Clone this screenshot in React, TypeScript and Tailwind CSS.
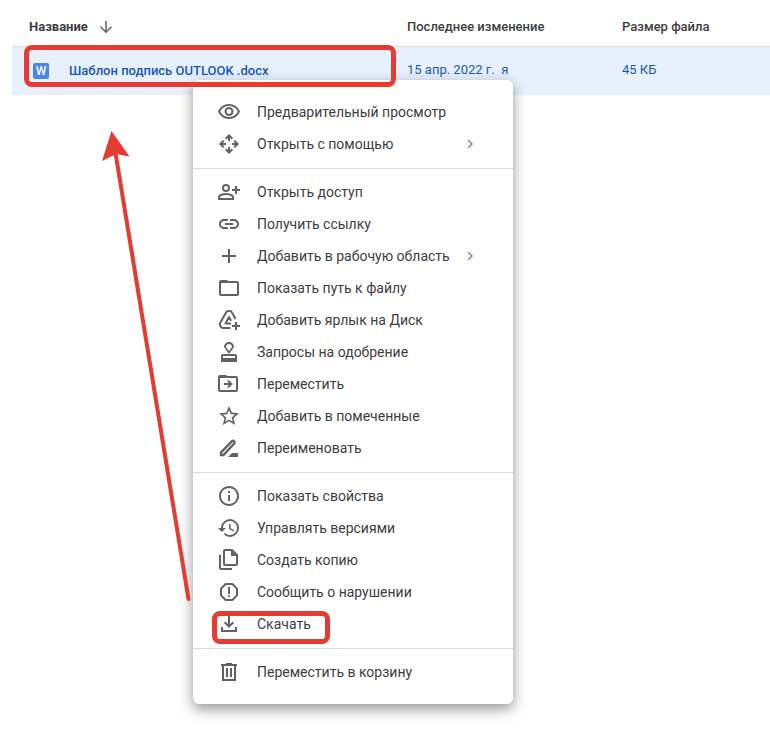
import type { ReactNode } from "react";
import {
  MdAdd,
  MdHistory,
  MdInfoOutline,
  MdLink,
  MdOutlineApproval,
  MdOutlineReport,
  MdOutlineVisibility,
  MdStarBorder,
} from "react-icons/md";

type Item = {
  label: string;
  icon: ReactNode;
  submenu?: boolean;
  marked?: boolean;
};

function StrokeIcon({ children }: { children: ReactNode }) {
  return (
    <svg
      width="24"
      height="24"
      viewBox="0 0 24 24"
      fill="none"
      stroke="currentColor"
      strokeWidth="2"
      aria-hidden="true"
    >
      {children}
    </svg>
  );
}

const groups: Item[][] = [
  [
    { label: "Предварительный просмотр", icon: <MdOutlineVisibility /> },
    {
      label: "Открыть с помощью",
      submenu: true,
      icon: (
        <StrokeIcon>
          <path d="M12 9V4M12 15v5M9 12H4M15 12h5" />
          <path d="M8.7 6.7 12 3.4l3.3 3.3M8.7 17.3l3.3 3.3 3.3-3.3M6.7 8.7 3.4 12l3.3 3.3M17.3 8.7l3.3 3.3-3.3 3.3" />
        </StrokeIcon>
      ),
    },
  ],
  [
    {
      label: "Открыть доступ",
      icon: (
        <StrokeIcon>
          <circle cx="9" cy="8" r="3" />
          <path d="M2 19v-2c0-2 4.5-3 7-3s7 1 7 3v2z" />
          <path d="M19 6v8M15 10h8" />
        </StrokeIcon>
      ),
    },
    { label: "Получить ссылку", icon: <MdLink /> },
    { label: "Добавить в рабочую область", icon: <MdAdd />, submenu: true },
    {
      label: "Показать путь к файлу",
      icon: (
        <StrokeIcon>
          <rect x="3" y="6" width="18" height="13" rx="1" />
          <path
            d="M2 7V6q0-2 2-2h6l2 2v1z"
            fill="currentColor"
            stroke="none"
          />
        </StrokeIcon>
      ),
    },
    {
      label: "Добавить ярлык на Диск",
      icon: (
        <StrokeIcon>
          <path d="M18.5 11 14.7 4Q14.2 3 13 3H11Q9.8 3 9.3 4L3 15.300Q2.400 16.300 3 17.300L4 19Q4.600 20 6 20H13.500" />
          <path
            d="M14 15.500H8.500L12 9l2 3.700"
            strokeWidth="2"
            strokeLinejoin="round"
          />
          <path d="M19 14v8M15 18h8" />
        </StrokeIcon>
      ),
    },
    { label: "Запросы на одобрение", icon: <MdOutlineApproval /> },
    {
      label: "Переместить",
      icon: (
        <StrokeIcon>
          <rect x="2" y="5" width="18" height="14" rx="1" />
          <path
            d="M1 6V5q0-2 2-2h6l2 2v1z"
            fill="currentColor"
            stroke="none"
          />
          <path d="M7 12h7M11 8.700l3.300 3.300-3.300 3.300" />
        </StrokeIcon>
      ),
    },
    { label: "Добавить в помеченные", icon: <MdStarBorder /> },
    {
      label: "Переименовать",
      icon: (
        <StrokeIcon>
          <path
            d="M4 19v-2.500L15 5.200Q16 4.300 17 5.300T17.200 7.500L6.500 19z"
            strokeWidth="2.4"
          />
          <path d="M11 21 15 17h6v4z" fill="currentColor" stroke="none" />
        </StrokeIcon>
      ),
    },
  ],
  [
    { label: "Показать свойства", icon: <MdInfoOutline /> },
    { label: "Управлять версиями", icon: <MdHistory /> },
    {
      label: "Создать копию",
      icon: (
        <StrokeIcon>
          <path d="M8 2h7l5 5v9q0 1-1 1H8q-1 0-1-1V3q0-1 1-1z" />
          <path d="M14 2v6h6z" fill="currentColor" stroke="none" />
          <path d="M3 7v13q0 1 1 1h11" />
        </StrokeIcon>
      ),
    },
    { label: "Сообщить о нарушении", icon: <MdOutlineReport /> },
    {
      label: "Скачать",
      marked: true,
      icon: (
        <StrokeIcon>
          <path d="M12 4v10M7.7 10.2l4.3 4.3 4.3-4.3M5 15v4h14v-4" />
        </StrokeIcon>
      ),
    },
  ],
  [
    {
      label: "Переместить в корзину",
      icon: (
        <StrokeIcon>
          <path d="M4 5h16M9 4h6M6 5v15h12V5M10 8v9M14 8v9" />
        </StrokeIcon>
      ),
    },
  ],
];

function MenuItem({ label, icon, submenu, marked }: Item) {
  return (
    <li role="none" className="relative">
      <button
        type="button"
        role="menuitem"
        aria-haspopup={submenu ? "menu" : undefined}
        className="flex h-8 w-full items-center gap-4 pl-6 pr-9 text-left"
      >
        <span className="shrink-0 text-2xl text-[#5f6368]">{icon}</span>
        <span className="min-w-0 flex-1 whitespace-nowrap">{label}</span>
        {submenu && (
          <svg
            className="shrink-0"
            width="14"
            height="14"
            viewBox="0 0 14 14"
            fill="none"
            stroke="#8a8d91"
            strokeWidth="1.5"
            aria-hidden="true"
          >
            <path d="M5 3l4 4-4 4" />
          </svg>
        )}
      </button>
      {marked && (
        <div className="pointer-events-none absolute left-[19px] top-[3px] h-[33px] w-[118px] rounded-lg border-5 border-[#e53b30]" />
      )}
    </li>
  );
}

function ContextMenu() {
  return (
    <div
      role="menu"
      className="absolute left-[193px] top-20 w-80 rounded-md bg-white py-4 text-sm text-[#3c4043] shadow-[0_5px_14px_rgba(0,0,0,0.42)]"
    >
      {groups.map((group, i) => (
        <ul
          key={i}
          role="group"
          className={i > 0 ? "mt-2 border-t border-[#dadce0] pt-[7px]" : ""}
        >
          {group.map((item) => (
            <MenuItem key={item.label} {...item} />
          ))}
        </ul>
      ))}
    </div>
  );
}

function FileTable() {
  return (
    <table className="w-full table-fixed border-collapse text-left text-[13px]">
      <thead>
        <tr className="h-[46px] border-b border-[#dadce0] text-[#3c4043]">
          <th className="pl-[17px] pt-2 font-bold">
            <button type="button" className="flex items-center gap-[9px]">
              Название
              <svg
                width="18"
                height="18"
                viewBox="0 0 18 18"
                fill="none"
                stroke="#5f6368"
                strokeWidth="1.5"
                aria-hidden="true"
              >
                <path d="M9 3v11M3.5 8.7 9 14.2l5.5-5.5" />
              </svg>
            </button>
          </th>
          <th className="w-[215px] pt-2 font-medium">Последнее изменение</th>
          <th className="w-[148px] pt-2 font-medium">Размер файла</th>
        </tr>
      </thead>
      <tbody>
        <tr className="h-[49px] bg-[#e8f0fe] text-[#185abc]">
          <td className="relative pl-[21px]">
            <a href="#file" className="flex items-center gap-5 font-medium">
              <span className="flex size-4 items-center justify-center rounded-xs bg-[#4a86e8] text-xs text-white">
                W
              </span>
              Шаблон подпись OUTLOOK .docx
            </a>
            <div className="pointer-events-none absolute -top-0.5 bottom-2 left-3 right-[11px] z-10 rounded-lg border-5 border-[#e53b30]" />
          </td>
          <td className="pb-0.5">15 апр. 2022 г.&nbsp; я</td>
          <td className="pb-0.5">45 КБ</td>
        </tr>
      </tbody>
    </table>
  );
}

export default function App() {
  return (
    <main className="relative min-h-screen bg-white pl-3 font-['Roboto',sans-serif]">
      <FileTable />
      <ContextMenu />
      <svg
        className="pointer-events-none absolute left-[96px] top-[128px]"
        width="100"
        height="480"
        viewBox="0 0 100 480"
        aria-hidden="true"
      >
        <path
          d="M19 22 92.500 471"
          stroke="#e53b30"
          strokeWidth="4"
          strokeLinecap="round"
        />
        <path d="M15.500 3 33.500 28.500 20 26 6 33z" fill="#e53b30" />
      </svg>
    </main>
  );
}
